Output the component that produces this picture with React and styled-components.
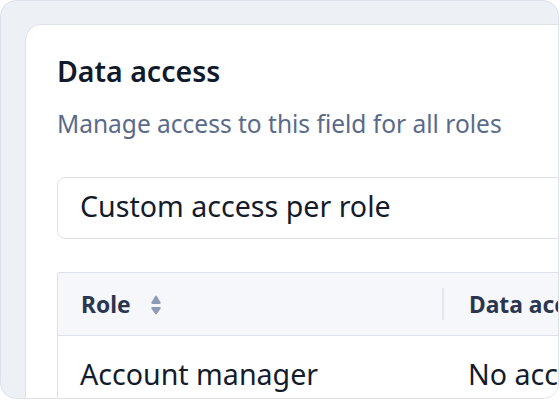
import React from 'react';
import styled, { createGlobalStyle } from 'styled-components';

const GlobalStyle = createGlobalStyle`
  body {
    margin: 0;
    background: #ffffff;
    font-family: "Noto Sans", "Open Sans", sans-serif;
  }
  * { box-sizing: border-box; }
`;

const Frame = styled.div`
  width: 559px;
  height: 399px;
  border: 1px solid #dde2ea;
  border-radius: 16px;
  background: #edf0f5;
  padding: 23px 0 0 24px;
  overflow: hidden;
`;

const Card = styled.section`
  width: 640px;
  min-height: 420px;
  background: #ffffff;
  border: 1px solid #dde2ea;
  border-radius: 16px;
  padding: 28px 32px 0 31px;
`;

const Title = styled.h2`
  margin: 0;
  font-size: 28.5px;
  line-height: 36px;
  font-weight: 600;
  color: #111a2b;
`;

const Subtitle = styled.p`
  margin: 19px 0 0;
  font-size: 24.5px;
  line-height: 32px;
  color: #5a6a8a;
`;

const Select = styled.div`
  margin-top: 37px;
  border: 1px solid #dde2ea;
  border-radius: 8px;
  padding: 12px 22px 16px;
  font-size: 28.6px;
  line-height: 32px;
  color: #141c2b;
`;

const Table = styled.div`
  margin-top: 33px;
  border: 1px solid #dde2ea;
  border-radius: 2px 2px 0 0;
`;

const Row = styled.div`
  display: grid;
  grid-template-columns: 386px 1fr;
  background: ${p => (p.$head ? '#f5f7fa' : '#ffffff')};
  border-bottom: ${p => (p.$head ? '1px solid #dde2ea' : 'none')};
`;

const HeadCell = styled.div`
  position: relative;
  display: flex;
  align-items: center;
  padding: 17px 0 15px ${p => p.$pad}px;
  font-size: 22.8px;
  line-height: 30px;
  font-weight: 700;
  color: #2a3650;
  white-space: nowrap;

  &::after {
    content: '';
    display: ${p => (p.$divider ? 'block' : 'none')};
    position: absolute;
    right: 0;
    top: 15px;
    width: 2px;
    height: 32px;
    background: #e2e6ed;
  }
`;

const Cell = styled.div`
  padding: 20px 0 20px ${p => p.$pad}px;
  font-size: 28.6px;
  line-height: 36px;
  color: #141c2b;
  white-space: nowrap;
`;

const SortIcon = styled.svg`
  margin-left: 20px;
  width: 10px;
  height: 20px;
  fill: #8e9bb5;
`;

const Sort = () => (
  <SortIcon viewBox="0 0 10 20">
    <path d="M4.2 0.9 Q5 0 5.8 0.9 L9.6 7.6 Q10 9 8.6 9 H1.4 Q0 9 0.4 7.6 Z" />
    <path d="M4.2 19.1 Q5 20 5.8 19.1 L9.6 13.4 Q10 12 8.6 12 H1.4 Q0 12 0.4 13.4 Z" />
  </SortIcon>
);

export default function App() {
  return (
    <>
      <GlobalStyle />
      <Frame>
        <Card>
          <Title>Data access</Title>
          <Subtitle>Manage access to this field for all roles</Subtitle>
          <Select>Custom access per role</Select>
          <Table>
            <Row $head>
              <HeadCell $pad={23} $divider>
                Role
                <Sort />
              </HeadCell>
              <HeadCell $pad={25}>Data access</HeadCell>
            </Row>
            <Row>
              <Cell $pad={22}>Account manager</Cell>
              <Cell $pad={24}>No access</Cell>
            </Row>
          </Table>
        </Card>
      </Frame>
    </>
  );
}
